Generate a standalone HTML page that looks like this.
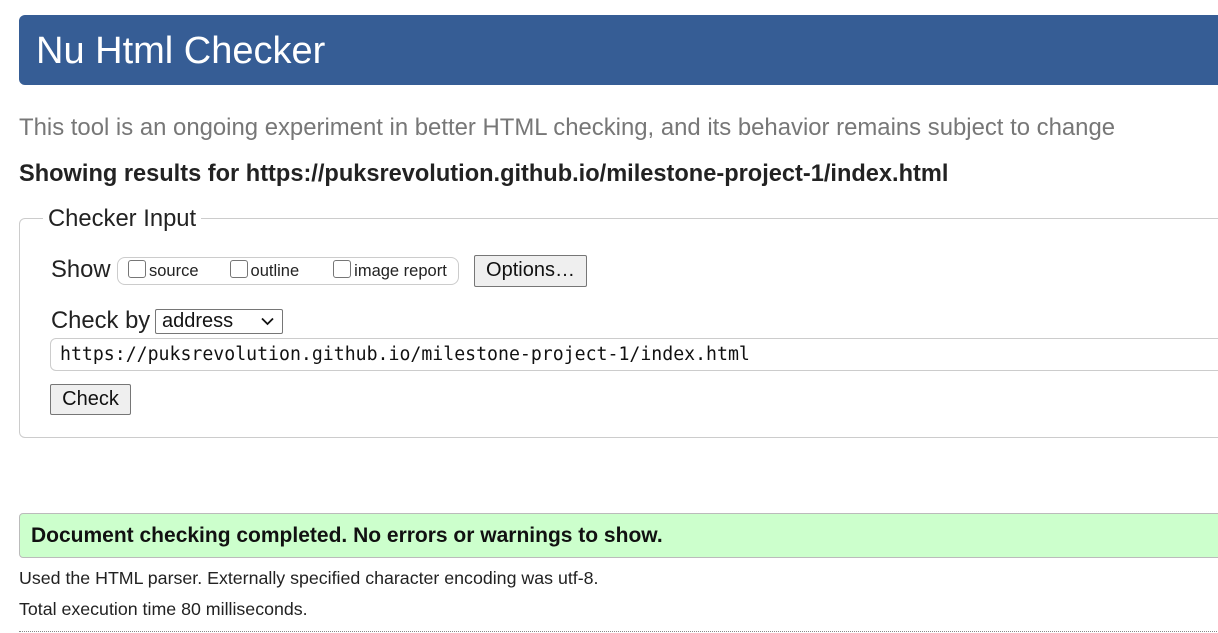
<!DOCTYPE html>
<html><head><meta charset="utf-8"><style>
*{margin:0;padding:0;box-sizing:border-box}
body{width:1218px;height:633px;overflow:hidden;background:#fff;font-family:"Liberation Sans",Arial,sans-serif;color:#222;position:relative}
.a{position:absolute;white-space:nowrap}
.btn{position:absolute;background:#efefef;border:1px solid #767676;border-radius:2px;font-size:20px;color:#111;text-align:center}
.cb{display:inline-block;width:18px;height:18px;border:1px solid #767676;border-radius:3px;background:#fff;vertical-align:-2px;margin-right:3px}
</style></head><body>
<div class="a" style="left:19px;top:15px;width:1220px;height:70px;background:#365d95;border-radius:6px 0 0 6px"></div>
<div class="a" style="left:36px;top:28px;font-size:38px;line-height:46px;color:#fff">Nu Html Checker</div>
<div class="a" style="left:19px;top:114px;font-size:23.9px;line-height:28px;color:#777">This tool is an ongoing experiment in better HTML checking, and its behavior remains subject to change</div>
<div class="a" style="left:19px;top:160px;font-size:23.6px;line-height:28px;font-weight:bold;color:#222">Showing results for https://puksrevolution.github.io/milestone-project-1/index.html</div>
<div class="a" style="left:19px;top:218px;width:1220px;height:220px;border:1px solid #ccc;border-radius:6px 0 0 6px"></div>
<div class="a" style="left:43px;top:205px;padding:0 5px;background:#fff;font-size:23.8px;line-height:28px;color:#222">Checker Input</div>
<div class="a" style="left:51px;top:256px;font-size:23.8px;line-height:28px">Show</div>
<div class="a" style="left:117px;top:257px;width:342px;height:28px;border:1px solid #ccc;border-radius:8px;font-size:16.5px;line-height:26px;padding-left:10px;color:#222"><span class="cb"></span>source<span style="display:inline-block;width:31px"></span><span class="cb"></span>outline<span style="display:inline-block;width:34px"></span><span class="cb"></span>image report</div>
<div class="btn" style="left:474px;top:255px;width:113px;height:32px;line-height:29px">Options…</div>
<div class="a" style="left:51px;top:307px;font-size:23.8px;line-height:28px">Check by</div>
<div class="a" style="left:155px;top:309px;width:128px;height:25px;border:1px solid #767676;border-radius:2px;font-size:20px;line-height:23px;padding-left:6px;color:#111">address
<svg style="position:absolute;right:8px;top:7px" width="13" height="9" viewBox="0 0 13 9"><path d="M1 1.5L6.5 7L12 1.5" fill="none" stroke="#111" stroke-width="1.8"/></svg></div>
<div class="a" style="left:50px;top:338px;width:1200px;height:33px;border:1px solid #ccc;border-radius:6px;font-family:'DejaVu Sans Mono','Liberation Mono',monospace;font-size:18.2px;line-height:32px;padding-left:9px;color:#111">https://puksrevolution.github.io/milestone-project-1/index.html</div>
<div class="btn" style="left:50px;top:384px;width:81px;height:31px;line-height:28px">Check</div>
<div class="a" style="left:19px;top:513px;width:1220px;height:45px;background:#ccffcc;border:1px solid #bbb;border-radius:4px 0 0 4px"></div>
<div class="a" style="left:31px;top:522px;font-size:21px;line-height:28px;font-weight:bold;color:#111">Document checking completed. No errors or warnings to show.</div>
<div class="a" style="left:19px;top:568px;font-size:17.8px;line-height:21px;color:#222">Used the HTML parser. Externally specified character encoding was utf-8.</div>
<div class="a" style="left:19px;top:599px;font-size:17.8px;line-height:21px;color:#222">Total execution time 80 milliseconds.</div>
<div class="a" style="left:19px;top:631px;width:1220px;border-top:1px dotted #888"></div>
</body></html>
